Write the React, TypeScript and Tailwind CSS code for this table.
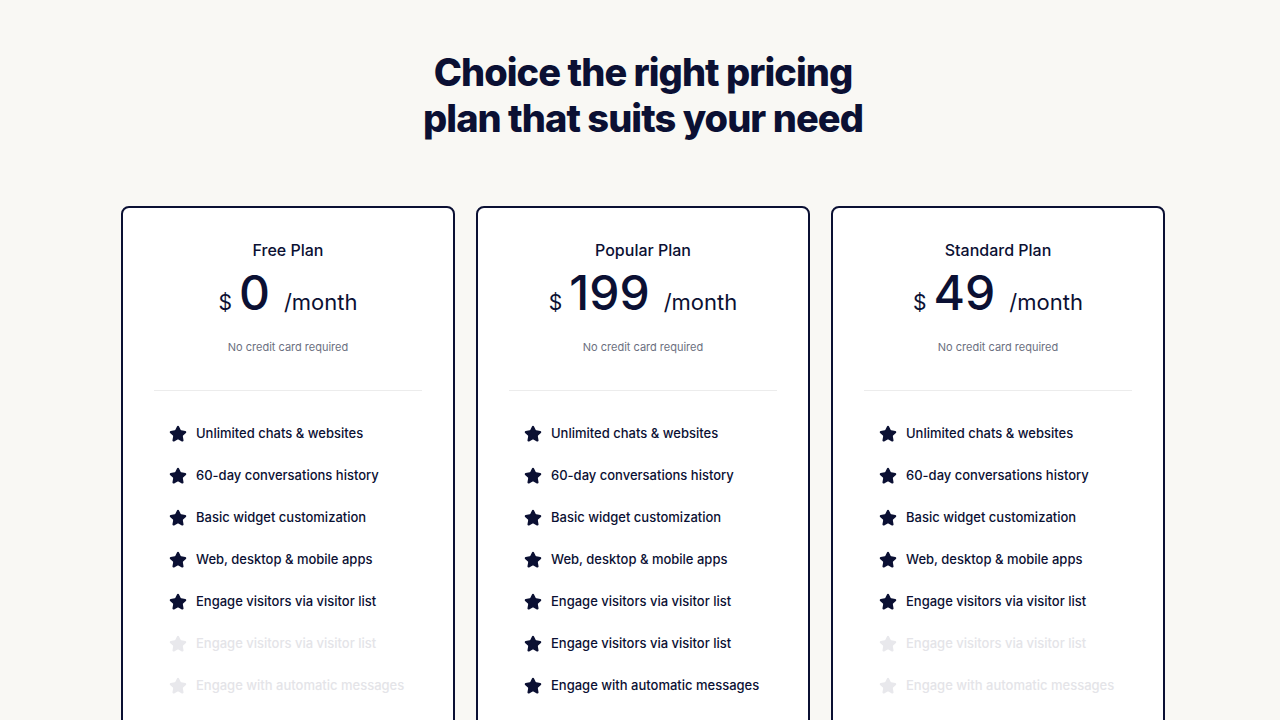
import React from 'react'
import { Star } from 'lucide-react'

type Plan = {
  name: string
  price: string
  enabled: number
}

const features = [
  'Unlimited chats & websites',
  '60-day conversations history',
  'Basic widget customization',
  'Web, desktop & mobile apps',
  'Engage visitors via visitor list',
  'Engage visitors via visitor list',
  'Engage with automatic messages',
]

const plans: Plan[] = [
  { name: 'Free Plan', price: '0', enabled: 5 },
  { name: 'Popular Plan', price: '199', enabled: 7 },
  { name: 'Standard Plan', price: '49', enabled: 5 },
]

function PlanCard({ plan }: { plan: Plan }) {
  return (
    <div className="w-[334px] shrink-0 rounded-[8px] border-2 border-[#0b1033] bg-white px-[31px] pb-12">
      <div className="pt-[30px] text-center">
        <h3 className="text-[16px] leading-6 font-medium text-[#0b1033]">{plan.name}</h3>
        <div className="mt-[7px] flex items-baseline justify-center text-[#0b1033]">
          <span className="text-[21px] leading-none">$</span>
          <span className="ml-[7px] text-[48px] leading-none font-medium">{plan.price}</span>
          <span className="ml-[14px] text-[22px] leading-none">/month</span>
        </div>
        <p className="mt-[22px] text-[11px] leading-4 text-[#6b6f80]">No credit card required</p>
      </div>
      <div className="mt-[35px] h-px bg-[#ececec]" />
      <ul className="pt-[22px] pl-[15px]">
        {features.map((f, i) => {
          const on = i < plan.enabled
          return (
            <li key={i} className="flex h-[42px] items-center gap-[9px]">
              <Star
                size={18}
                strokeWidth={2}
                fill="currentColor"
                className={on ? 'text-[#0b1033]' : 'text-[#e8e8ec]'}
              />
              <span className={`text-[13px] font-medium ${on ? 'text-[#0b1033]' : 'text-[#e4e4e8]'}`}>{f}</span>
            </li>
          )
        })}
      </ul>
    </div>
  )
}

export default function App() {
  return (
    <div className="h-[720px] overflow-hidden bg-[#f9f8f4]" style={{ fontFamily: 'Inter, "Noto Sans", sans-serif' }}>
      <div className="ml-[121px] w-[1044px] pt-[49px]">
        <h1 className="text-center text-[38px] leading-[46px] font-extrabold tracking-[-0.025em] text-[#0b1033]">
          Choice the right pricing
          <br />
          plan that suits your need
        </h1>
        <div className="mt-[65px] flex gap-[21px]">
          {plans.map((p) => (
            <PlanCard key={p.name} plan={p} />
          ))}
        </div>
      </div>
    </div>
  )
}
